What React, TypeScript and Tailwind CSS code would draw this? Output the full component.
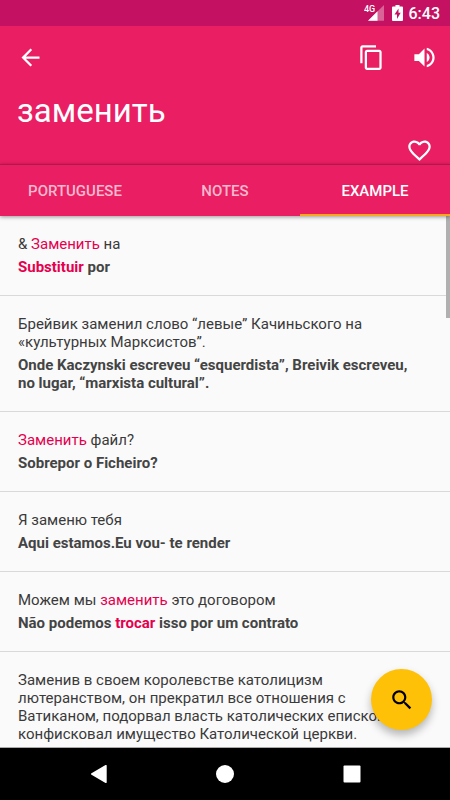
import type { ReactNode } from "react";

type Entry = { source: ReactNode; target?: ReactNode };

function Mark({ children }: { children: ReactNode }) {
  return <mark className="bg-transparent text-[#e4004f]">{children}</mark>;
}

const entries: Entry[] = [
  {
    source: <>&amp; <Mark>Заменить</Mark> на</>,
    target: <><Mark>Substituir</Mark> por</>,
  },
  {
    source: "Брейвик заменил слово “левые” Качиньского на «культурных Марксистов”.",
    target: "Onde Kaczynski escreveu “esquerdista”, Breivik escreveu, no lugar, “marxista cultural”.",
  },
  { source: <><Mark>Заменить</Mark> файл?</>, target: "Sobrepor o Ficheiro?" },
  { source: "Я заменю тебя", target: "Aqui estamos.Eu vou- te render" },
  {
    source: <>Можем мы <Mark>заменить</Mark> это договором</>,
    target: <>Não podemos <Mark>trocar</Mark> isso por um contrato</>,
  },
  {
    source:
      "Заменив в своем королевстве католицизм лютеранством, он прекратил все отношения с Ватиканом, подорвал власть католических епископов, конфисковал имущество Католической церкви.",
  },
];

const tabs = ["PORTUGUESE", "NOTES", "EXAMPLE"];

function StatusBar() {
  return (
    <div className="flex h-[26px] shrink-0 items-center justify-end bg-[#c51162] pr-2.5 text-white">
      <svg className="mr-2 h-[22px] w-5" viewBox="0 0 20 22" aria-label="4G signal">
        <path d="M20 3V18.700H4Z" fill="#fff" fillOpacity=".35" />
        <path d="M13.500 9.300V18.700H4Z" fill="#fff" />
        <text x="0" y="10" fill="#fff" fontSize="9" fontWeight="500" fontFamily="Roboto, sans-serif">4G</text>
      </svg>
      <svg className="mr-1.5 h-4 w-[11px]" viewBox="0 0 11 16" aria-label="Battery charging">
        <path fill="#fff" fillRule="evenodd" d="M3.500 0h4v1.500H10a1 1 0 0 1 1 1V15a1 1 0 0 1-1 1H1a1 1 0 0 1-1-1V2.500a1 1 0 0 1 1-1h2.500ZM6.500 3.500 2.500 9.500H5V14L8.700 7.800H6.500Z" />
      </svg>
      <span className="pt-0.5 text-base font-medium leading-5">6:43</span>
    </div>
  );
}

function IconButton({ label, path }: { label: string; path: string }) {
  return (
    <button type="button" aria-label={label} className="flex items-center justify-center text-white">
      <svg className="size-[27px]" viewBox="0 0 24 24" fill="currentColor">
        <path d={path} />
      </svg>
    </button>
  );
}

export default function App() {
  return (
    <div className="flex h-screen flex-col overflow-hidden bg-[#fafafa] font-[Roboto,sans-serif] text-[#3a3a3a]">
      <StatusBar />

      <header className="flex h-[138px] shrink-0 flex-col bg-[#e91e63] text-white">
        <div className="flex h-[62px] shrink-0 items-center pl-[17px] pr-3">
          <IconButton label="Back" path="M20 11H7.830l5.590-5.590L12 4l-8 8 8 8 1.410-1.410L7.830 13H20v-2z" />
          <div className="ml-auto flex items-center gap-[26px]">
            <IconButton
              label="Copy"
              path="M16 1H4c-1.100 0-2 .9-2 2v14h2V3h12V1zm3 4H8c-1.100 0-2 .9-2 2v14c0 1.100.9 2 2 2h11c1.100 0 2-.9 2-2V7c0-1.100-.9-2-2-2zm0 16H8V7h11v14z"
            />
            <IconButton
              label="Listen"
              path="M3 9v6h4l5 5V4L7 9H3zm13.500 3c0-1.770-1.020-3.290-2.500-4.030v8.050c1.480-.73 2.500-2.250 2.500-4.020zM14 3.230v2.060c2.890.86 5 3.540 5 6.710s-2.110 5.850-5 6.710v2.060c4.010-.91 7-4.490 7-8.770s-2.990-7.860-7-8.770z"
            />
          </div>
        </div>
        <h1 className="px-[17px] text-[33px] leading-[46px]">заменить</h1>
        <div className="flex justify-end pr-[17px] pt-[3px]">
          <IconButton
            label="Add to favorites"
            path="M16.500 3c-1.740 0-3.410.81-4.500 2.090C10.910 3.810 9.240 3 7.500 3 4.420 3 2 5.420 2 8.500c0 3.780 3.400 6.860 8.550 11.540L12 21.350l1.450-1.320C18.600 15.360 22 12.280 22 8.500 22 5.420 19.580 3 16.500 3zm-4.400 15.550l-.1.100-.1-.1C7.140 14.240 4 11.390 4 8.500 4 6.500 5.500 5 7.500 5c1.540 0 3.040.99 3.570 2.360h1.870C13.460 5.990 14.960 5 16.500 5c2 0 3.500 1.500 3.500 3.500 0 2.890-3.140 5.740-7.900 10.050z"
          />
        </div>
      </header>

      <div
        role="tablist"
        className="z-10 grid h-[52px] shrink-0 grid-cols-3 border-t border-[#b0184c] bg-[#e91e63] text-[15px] font-medium text-white shadow-[0_1px_4px_rgba(0,0,0,0.4)]"
      >
        {tabs.map((tab) => {
          const active = tab === "EXAMPLE";
          return (
            <button
              key={tab}
              type="button"
              role="tab"
              aria-selected={active}
              className={
                active
                  ? "border-b-2 border-[#ffa81c] pt-1 text-white"
                  : "border-b-2 border-transparent pt-1 text-white/70"
              }
            >
              {tab}
            </button>
          );
        })}
      </div>

      <main className="relative min-h-0 flex-1 border-b border-[#aaa]">
        <ul className="h-full overflow-hidden text-[15px] leading-[18px]">
          {entries.map((entry, i) => (
            <li key={i} className="border-b border-[#d9d9d9] py-[19px] pl-[18px] pr-[30px]">
              <p>{entry.source}</p>
              {entry.target && <p className="mt-[5px] font-bold text-[#444]">{entry.target}</p>}
            </li>
          ))}
        </ul>
        <div className="absolute right-0 top-0 h-[102px] w-1 bg-[#b0b0b0]" />
        <button
          type="button"
          aria-label="Search"
          className="absolute bottom-[17px] right-[18px] flex size-[61px] items-center justify-center rounded-full bg-[#ffc107] text-black shadow-[0_5px_8px_rgba(0,0,0,0.28)]"
        >
          <svg className="size-[26px]" viewBox="0 0 24 24" fill="currentColor">
            <path d="M15.500 14h-.79l-.28-.27C15.410 12.590 16 11.110 16 9.500 16 5.910 13.090 3 9.500 3S3 5.910 3 9.500 5.910 16 9.500 16c1.610 0 3.090-.59 4.230-1.570l.27.28v.79l5 4.990L20.490 19l-4.990-5zm-6 0C7.010 14 5 11.990 5 9.500S7.010 5 9.500 5 14 7.010 14 9.500 11.990 14 9.500 14z" />
          </svg>
        </button>
      </main>

      <nav className="flex h-[52px] shrink-0 items-center justify-center gap-[109px] bg-black text-white">
        <button type="button" aria-label="System back">
          <svg className="size-[18px]" viewBox="0 0 18 18" fill="currentColor">
            <path d="M17.700 .8V17.200a.8.8 0 0 1-1.200.7L2.500 9.800a.9.9 0 0 1 0-1.600L16.500.1A.8.8 0 0 1 17.700 .8Z" />
          </svg>
        </button>
        <button type="button" aria-label="Home">
          <svg className="size-[18px]" viewBox="0 0 18 18" fill="currentColor">
            <circle cx="9" cy="9" r="9" />
          </svg>
        </button>
        <button type="button" aria-label="Recent apps">
          <svg className="size-[18px]" viewBox="0 0 18 18" fill="currentColor">
            <rect x=".5" y=".5" width="17" height="17" rx="1" />
          </svg>
        </button>
      </nav>
    </div>
  );
}
